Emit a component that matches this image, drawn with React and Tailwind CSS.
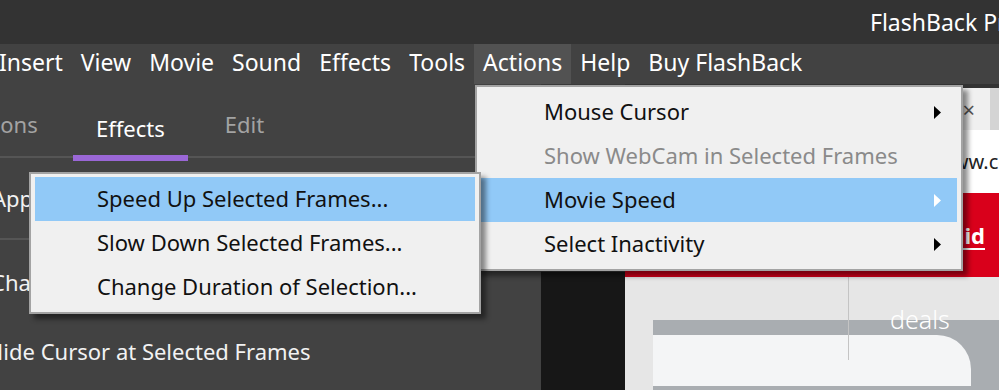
import React from 'react';

const menuItems = ['Insert', 'View', 'Movie', 'Sound', 'Effects', 'Tools', 'Actions', 'Help', 'Buy FlashBack'];

const Arrow = ({ white }) => (
    <svg width="8" height="13" viewBox="0 0 8 13" className="shrink-0">
        <polygon points="0,0 7,6.5 0,13" fill={white ? '#ffffff' : '#000000'} />
    </svg>
);

const MenuRow = ({ label, active, disabled, arrow, pl }) => (
    <div className={`flex items-center h-[44px] ${pl} pr-[15px] ${active ? 'bg-[#91c9f7]' : ''}`}>
        <span className={`flex-1 whitespace-nowrap pb-[3px] ${disabled ? 'text-[#8a8a8a]' : 'text-[#111]'}`}>{label}</span>
        {arrow && <Arrow white={active} />}
    </div>
);

const App = () => {
    return (
        <div className="relative w-[999px] h-[390px] overflow-hidden bg-[#424242] text-[22px] leading-[32px]" style={{ fontFamily: '"Noto Sans", "Open Sans", sans-serif' }}>
            {/* title bar */}
            <div className="h-[44px] bg-[#333333] flex items-center overflow-hidden text-[23px]">
                <span className="ml-[870px] whitespace-nowrap text-white">FlashBack Pro 5 Player</span>
            </div>

            {/* menu bar */}
            <div className="h-[40px] bg-[#424242] flex items-stretch text-[23px]">
                <div className="flex items-stretch ml-[-10px]">
                    {menuItems.map((m) => (
                        <div key={m} className={`flex items-center px-[9px] pb-[4px] whitespace-nowrap text-white ${m === 'Actions' ? 'bg-[#525252]' : ''}`}>{m}</div>
                    ))}
                </div>
            </div>

            <div className="flex h-[306px]">
                {/* left panel */}
                <div className="w-[541px] shrink-0 bg-[#424242] flex flex-col overflow-hidden">
                    <div className="flex items-end border-b-2 border-[#555555] pt-[24px] whitespace-nowrap">
                        <div className="ml-[-38px] w-[111px] pb-[16px] text-[#a3a3a3]">Actions</div>
                        <div className="relative z-10 px-[23px] pb-[11px] mb-[-5px] border-b-[6px] border-[#9a67d6] text-white">Effects</div>
                        <div className="ml-[37px] pb-[16px] text-[#a3a3a3]">Edit</div>
                    </div>
                    <div className="h-[82px] flex items-center border-b-2 border-[#555555] whitespace-nowrap text-[#f2f2f2]">
                        <span className="ml-[-8px]">Apply Effects</span>
                    </div>
                    <div className="mt-[26px] ml-[-9px] whitespace-nowrap text-[#f2f2f2]">Change Mouse Cursor</div>
                    <div className="mt-[37px] ml-[-13px] whitespace-nowrap text-[#f2f2f2]">Hide Cursor at Selected Frames</div>
                </div>

                {/* browser preview */}
                <div className="flex-1 min-w-0 flex">
                    <div className="w-[84px] shrink-0 flex flex-col">
                        <div className="h-[188px] bg-[#3a3a3a]"></div>
                        <div className="flex-1 bg-[#171717]"></div>
                    </div>
                    <div className="flex-1 min-w-0 flex flex-col overflow-hidden">
                        <div className="h-[4px] bg-[#333333]"></div>
                        <div className="h-[42px] bg-[#d4d4d4] flex">
                            <div className="w-[365px] bg-[#f0f0f0] flex items-center justify-end pr-[15px] text-[22px] text-[#555]">×</div>
                        </div>
                        <div className="h-[63px] bg-white flex items-center overflow-hidden">
                            <span className="ml-[312px] whitespace-nowrap text-[20px] text-[#222]">www.ccc.net</span>
                        </div>
                        <div className="h-[84px] bg-[#d9001b] flex items-center justify-end pr-[14px]">
                            <span className="font-bold text-white underline underline-offset-4">Paid</span>
                        </div>
                        <div className="relative flex-1 bg-[#e6e6e6] pt-[43px] pl-[28px]">
                            <div className="h-full bg-[#a9adb1] pt-[15px]">
                                <div className="h-[51px] w-[318px] bg-[#f4f5f6] rounded-tr-[34px]"></div>
                            </div>
                            <div className="absolute left-[223px] top-0 w-px h-[83px] bg-[#c4c4c4]"></div>
                            <div className="absolute left-[265px] top-[26px] text-[25px] text-white font-light">deals</div>
                        </div>
                    </div>
                </div>
            </div>

            {/* Actions dropdown */}
            <div className="absolute left-[475px] top-[85px] w-[488px] border-2 border-[#a3a3a3] bg-[#f0f0f0] px-[4px] py-[3px] shadow-[5px_5px_5px_rgba(0,0,0,0.45)]">
                <MenuRow label="Mouse Cursor" arrow pl="pl-[63px]" />
                <MenuRow label="Show WebCam in Selected Frames" disabled pl="pl-[63px]" />
                <MenuRow label="Movie Speed" arrow active pl="pl-[63px]" />
                <MenuRow label="Select Inactivity" arrow pl="pl-[63px]" />
            </div>

            {/* Movie Speed submenu */}
            <div className="absolute left-[29px] top-[172px] w-[452px] border-2 border-[#a3a3a3] bg-[#f0f0f0] px-[4px] py-[3px] shadow-[5px_5px_5px_rgba(0,0,0,0.45)]">
                <MenuRow label="Speed Up Selected Frames..." active pl="pl-[62px]" />
                <MenuRow label="Slow Down Selected Frames..." pl="pl-[62px]" />
                <MenuRow label="Change Duration of Selection..." pl="pl-[62px]" />
            </div>
        </div>
    );
};

export default App;
